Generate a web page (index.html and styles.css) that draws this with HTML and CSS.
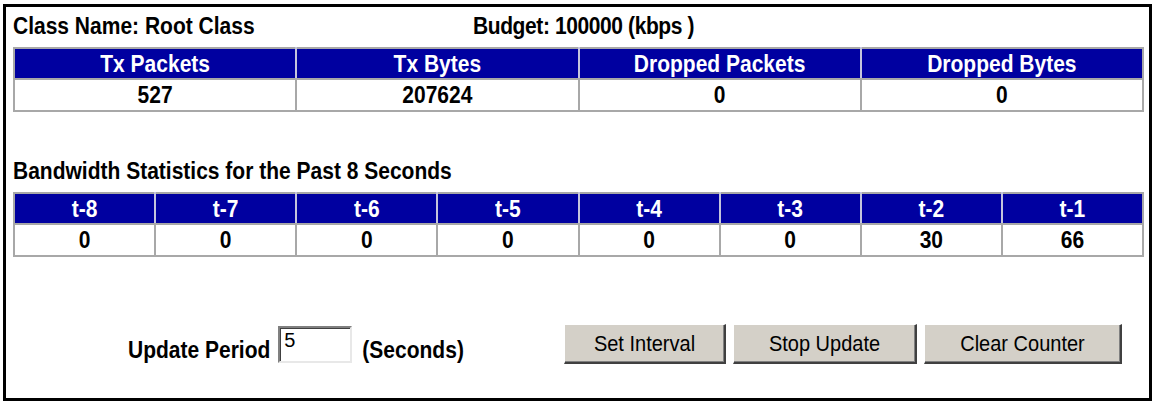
FILE: index.html
```html
<!DOCTYPE html>
<html>
<head>
<meta charset="utf-8">
<title>Class Statistics</title>
<link rel="stylesheet" href="styles.css">
</head>
<body>
<div class="frame">
  <div class="title-row">
    <div class="title-name"><span class="t">Class Name: Root Class</span></div>
    <div class="title-budget"><span class="t">Budget: 100000 (kbps )</span></div>
  </div>
  <table class="stats stats-4">
    <tr>
      <th><span class="t">Tx Packets</span></th>
      <th><span class="t">Tx Bytes</span></th>
      <th><span class="t">Dropped Packets</span></th>
      <th><span class="t">Dropped Bytes</span></th>
    </tr>
    <tr>
      <td><span class="t">527</span></td>
      <td><span class="t">207624</span></td>
      <td><span class="t">0</span></td>
      <td><span class="t">0</span></td>
    </tr>
  </table>
  <div class="section-title"><span class="t">Bandwidth Statistics for the Past 8 Seconds</span></div>
  <table class="stats stats-8">
    <tr>
      <th><span class="t">t-8</span></th>
      <th><span class="t">t-7</span></th>
      <th><span class="t">t-6</span></th>
      <th><span class="t">t-5</span></th>
      <th><span class="t">t-4</span></th>
      <th><span class="t">t-3</span></th>
      <th><span class="t">t-2</span></th>
      <th><span class="t">t-1</span></th>
    </tr>
    <tr>
      <td><span class="t">0</span></td>
      <td><span class="t">0</span></td>
      <td><span class="t">0</span></td>
      <td><span class="t">0</span></td>
      <td><span class="t">0</span></td>
      <td><span class="t">0</span></td>
      <td><span class="t">30</span></td>
      <td><span class="t">66</span></td>
    </tr>
  </table>
  <div class="controls">
    <div class="period">
      <span class="label t">Update Period</span>
      <input class="period-input" type="text" value="5">
      <span class="label t">(Seconds)</span>
    </div>
    <div class="buttons">
      <button class="btn btn-set"><span class="t">Set Interval</span></button>
      <button class="btn btn-stop"><span class="t">Stop Update</span></button>
      <button class="btn btn-clear"><span class="t">Clear Counter</span></button>
    </div>
  </div>
</div>
</body>
</html>
```
FILE: styles.css
```css
html, body {
  margin: 0;
  padding: 0;
  background: #ffffff;
}

body {
  font-family: "Liberation Sans", Arial, sans-serif;
  color: #000000;
}

.t {
  display: inline-block;
  transform: scaleY(1.12);
}

.frame {
  box-sizing: border-box;
  margin: 4px 0 0 3px;
  width: 1149px;
  height: 397px;
  border: 3px solid #000000;
  padding: 7px 5px 0 7px;
}

.title-row {
  display: flex;
  font-weight: bold;
  font-size: 21px;
  line-height: 24px;
}

.title-name {
  width: 460px;
}

.title-budget {
  letter-spacing: -0.4px;
}

.stats {
  width: 100%;
  table-layout: fixed;
  border-collapse: collapse;
  border: 2px solid #a8a8a8;
  font-size: 21px;
  font-weight: bold;
  text-align: center;
}

.stats-4 {
  margin-top: 9px;
}

.stats-8 {
  margin-top: 9px;
}

.stats th {
  background: #0000a0;
  color: #ffffff;
  height: 29px;
  padding: 0;
  border-left: 2px solid #c4c4dc;
  border-bottom: 2px solid #a8a8a8;
}

.stats th:first-child,
.stats td:first-child {
  border-left: none;
}

.stats td {
  height: 30px;
  padding: 0;
  border-left: 2px solid #a8a8a8;
  background: #ffffff;
}

.section-title {
  margin-top: 47px;
  font-weight: bold;
  font-size: 21px;
  line-height: 24px;
}

.controls {
  display: flex;
  align-items: center;
  margin-top: 67px;
  height: 40px;
}

.period {
  display: flex;
  align-items: center;
  margin-left: 115px;
  width: 436px;
}

.label {
  font-weight: bold;
  font-size: 21px;
  line-height: 24px;
  margin-top: 12px;
}

.period-input {
  box-sizing: border-box;
  width: 74px;
  height: 37px;
  margin: 0 10px 0 8px;
  padding: 0 0 7px 4px;
  font-family: "Liberation Sans", Arial, sans-serif;
  font-size: 20px;
  color: #000000;
  background: #ffffff;
  border-top: 2px solid #808080;
  border-left: 2px solid #808080;
  border-right: 2px solid #e8e8e8;
  border-bottom: 2px solid #e8e8e8;
  box-shadow: inset 1px 1px 0 #404040;
  outline: none;
}

.buttons {
  display: flex;
  gap: 7px;
}

.btn {
  box-sizing: border-box;
  height: 40px;
  padding: 0;
  font-family: "Liberation Sans", Arial, sans-serif;
  font-size: 20px;
  color: #000000;
  background: #d4d0c8;
  border-top: 1px solid #ffffff;
  border-left: 1px solid #ffffff;
  border-right: 2px solid #404040;
  border-bottom: 2px solid #404040;
  box-shadow: inset -1px -1px 0 #808080;
  border-radius: 0;
}

.btn-set {
  width: 162px;
}

.btn-stop {
  width: 184px;
}

.btn-clear {
  width: 198px;
}
```
